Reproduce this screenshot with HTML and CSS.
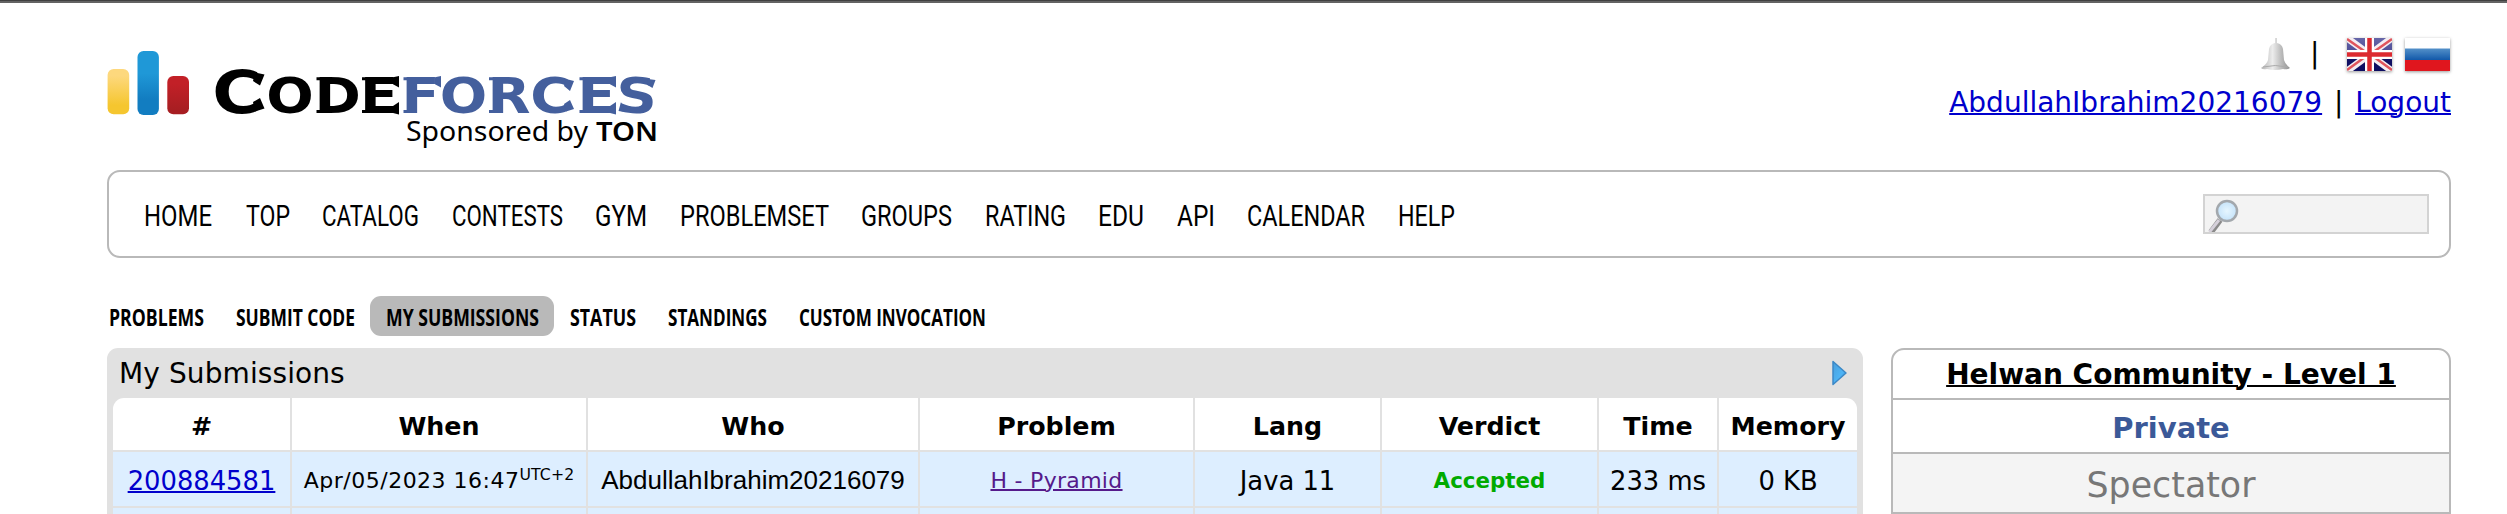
FILE: index.html
```html
<!DOCTYPE html>
<html lang="en">
<head>
<meta charset="utf-8">
<title>My Submissions - Codeforces</title>
<link rel="stylesheet" href="styles.css">
</head>
<body>
<div class="topline"></div>
<div class="page">
  <header class="header">
    <svg class="logo" width="556" height="106" viewBox="0 0 556 106">
      <defs>
        <linearGradient id="gy" x1="0" y1="0" x2="0" y2="1"><stop offset=".15" stop-color="#fdd87d"/><stop offset=".8" stop-color="#f5c62f"/></linearGradient>
        <linearGradient id="gb" x1="0" y1="0" x2="0" y2="1"><stop offset=".35" stop-color="#1f98d7"/><stop offset=".75" stop-color="#127dc1"/></linearGradient>
        <linearGradient id="gr" x1="0" y1="0" x2="0" y2="1"><stop offset=".2" stop-color="#c22027"/><stop offset=".9" stop-color="#a71e22"/></linearGradient>
      </defs>
      <rect x=".6" y="32" width="21.6" height="45.3" rx="6" fill="url(#gy)"/>
      <rect x="30.5" y="14" width="21.4" height="64" rx="6" fill="url(#gb)"/>
      <rect x="60.3" y="39" width="21.7" height="38.3" rx="6" fill="url(#gr)"/>
      <g class="word" transform="scale(1.14 1)">
        <text x="92.3 139.6 182.1 221.9" y="76"><tspan class="cap">C</tspan>ODE</text>
        <text class="blue" x="258.3 291.8 333.8 371.2 412.7 447" y="76">FORCES</text>
      </g>
      <path d="M148 35.500L157.500 37.500 153 48.500 146 44zM148 74.500L157.500 71.500 153 61 146 65zM209.500 40.300h5v3h-5zM209.500 73h5v3h-5zM255 40.300h5v3h-5zM255 73h5v3h-5zM286 40.300L292 39v11.500l-6-3.300zM286 76l6 1.500V65l-6 4z"/>
      <path class="blue" d="M296.500 40.300h5v3h-5zM296.500 73h13v3h-13zM328 40.300l6-1.300v11.500l-6-3.300zM382 40.300h5v3h-5zM382 73h13v3h-13zM459 42L467 44 463 54 457 49zM459 74.500L467 72 463 63 457 67zM472.500 40.300h5v3h-5zM472.500 73h5v3h-5zM503 40.300l6-1.300v11.500l-6-3.300zM503 76l6 1.500V65l-6 4zM541 42l7.500 1-3 8-5-3zM514 65l-2.500 9 6 1z"/>
      <text class="sponsor" x="299" y="104" textLength="182" lengthAdjust="spacingAndGlyphs">Sponsored by</text>
      <text class="sponsor ton" x="489" y="104" textLength="62" lengthAdjust="spacingAndGlyphs">TON</text>
    </svg>
    <div class="account">
      <div class="langs">
        <svg class="bell" width="31" height="34" viewBox="0 0 31 34">
          <defs><linearGradient id="be"><stop offset="0" stop-color="#b4b4b4"/><stop offset=".4" stop-color="#ececec"/><stop offset=".65" stop-color="#c3c3c3"/><stop offset="1" stop-color="#8f8f8f"/></linearGradient></defs>
          <path d="M15 1h2v5q5 1 6 6l1 11q1 4 6 8-3 2-7 1-8 2-16 0-4 1-6-1 6-4 7-8l1-11q1-5 6-6z" fill="url(#be)"/>
          <path d="M3 30q12-3 25 0" fill="none" stroke="#aaa"/>
        </svg>
        <span class="bar">|</span>
        <svg class="flag" width="45" height="33" viewBox="0 0 45 33">
          <defs><linearGradient id="uk" x1="0" y1="0" x2="0" y2="1"><stop offset="0" stop-color="#6666a8"/><stop offset=".48" stop-color="#4a4a94"/><stop offset=".52" stop-color="#151567"/><stop offset="1" stop-color="#0c0c60"/></linearGradient></defs>
          <rect width="45" height="33" fill="url(#uk)"/>
          <svg width="45" height="33" class="clip">
            <path d="M0 0l45 33M45 0L0 33" stroke="#f4eef2" stroke-width="7"/>
            <path d="M0 1l20 14M45 1L25 15M0 32l18-13M45 32L27 19" stroke="#e0555c" stroke-width="2.500"/>
          </svg>
          <path d="M22.500 0v33M0 16.500h45" stroke="#fff" stroke-width="9"/>
          <path d="M22.500 0v33M0 16.500h45" stroke="#dc2a30" stroke-width="4.500"/>
        </svg>
        <svg class="flag" width="45" height="33" viewBox="0 0 45 33">
          <defs><linearGradient id="ru" x1="0" y1="0" x2="0" y2="1"><stop offset="0" stop-color="#5390c9"/><stop offset="1" stop-color="#0f56a8"/></linearGradient></defs>
          <rect width="45" height="33" fill="#fff"/>
          <rect y="10.500" width="45" height="12" fill="url(#ru)"/>
          <rect y="22" width="45" height="11" fill="#e0161e"/>
        </svg>
      </div>
      <div class="user"><a href="#" class="handle">AbdullahIbrahim20216079</a><span class="sep">|</span><a href="#" class="logout">Logout</a></div>
    </div>
  </header>

  <nav class="menu">
    <div class="menu-items">
      <svg width="69" height="30"><text y="27" textLength="68" lengthAdjust="spacingAndGlyphs">HOME</text></svg>
      <svg width="44" height="30"><text y="27" textLength="44" lengthAdjust="spacingAndGlyphs">TOP</text></svg>
      <svg width="97" height="30"><text y="27" textLength="97" lengthAdjust="spacingAndGlyphs">CATALOG</text></svg>
      <svg width="111" height="30"><text y="27" textLength="111" lengthAdjust="spacingAndGlyphs">CONTESTS</text></svg>
      <svg width="52" height="30"><text y="27" textLength="52" lengthAdjust="spacingAndGlyphs">GYM</text></svg>
      <svg width="149" height="30"><text y="27" textLength="149" lengthAdjust="spacingAndGlyphs">PROBLEMSET</text></svg>
      <svg width="91" height="30"><text y="27" textLength="91" lengthAdjust="spacingAndGlyphs">GROUPS</text></svg>
      <svg width="81" height="30"><text y="27" textLength="81" lengthAdjust="spacingAndGlyphs">RATING</text></svg>
      <svg width="46" height="30"><text y="27" textLength="46" lengthAdjust="spacingAndGlyphs">EDU</text></svg>
      <svg width="38" height="30"><text y="27" textLength="38" lengthAdjust="spacingAndGlyphs">API</text></svg>
      <svg width="118" height="30"><text y="27" textLength="118" lengthAdjust="spacingAndGlyphs">CALENDAR</text></svg>
      <svg width="58" height="30"><text y="27" textLength="57" lengthAdjust="spacingAndGlyphs">HELP</text></svg>
    </div>
    <div class="search">
      <svg width="34" height="36" viewBox="0 0 34 36">
        <defs><radialGradient id="le"><stop offset="0" stop-color="#e6f6ff"/><stop offset="1" stop-color="#c5e3fa"/></radialGradient></defs>
        <path d="M15 24L6 36" stroke="#8a8a8a" stroke-width="6"/>
        <path d="M14 24L4.500 36" stroke="#d5d0da" stroke-width="3"/>
        <circle cx="22" cy="15" r="10" fill="url(#le)" stroke="#a3a8ad" stroke-width="2.500"/>
      </svg>
    </div>
  </nav>

  <nav class="submenu">
    <svg width="96" height="40"><text x="1" y="30" textLength="95" lengthAdjust="spacingAndGlyphs">PROBLEMS</text></svg>
    <svg width="119" height="40"><text y="30" textLength="119" lengthAdjust="spacingAndGlyphs">SUBMIT CODE</text></svg>
    <span class="current"><svg width="154" height="40"><text x="1" y="30" textLength="153" lengthAdjust="spacingAndGlyphs">MY SUBMISSIONS</text></svg></span>
    <svg width="66" height="40"><text y="30" textLength="66" lengthAdjust="spacingAndGlyphs">STATUS</text></svg>
    <svg width="99" height="40"><text y="30" textLength="99" lengthAdjust="spacingAndGlyphs">STANDINGS</text></svg>
    <svg width="187" height="40"><text y="30" textLength="187" lengthAdjust="spacingAndGlyphs">CUSTOM INVOCATION</text></svg>
  </nav>

  <main class="content">
    <section class="datatable">
      <div class="caption">
        <span>My Submissions</span>
        <svg width="15" height="26" viewBox="0 0 15 26">
          <defs><linearGradient id="ar" x1="0" y1="0" x2="1" y2="1"><stop offset="0" stop-color="#4a9fdc"/><stop offset=".6" stop-color="#4db4f5"/><stop offset="1" stop-color="#2d86cd"/></linearGradient></defs>
          <path d="M1 1.500L14 13 1 24.500z" fill="url(#ar)" stroke="#3c88c6" stroke-width="1.500" stroke-linejoin="round"/>
        </svg>
      </div>
      <div class="grid">
        <div class="th">#</div><div class="th">When</div><div class="th">Who</div><div class="th">Problem</div><div class="th">Lang</div><div class="th">Verdict</div><div class="th">Time</div><div class="th">Memory</div>
        <div class="td"><a href="#" class="id">200884581</a></div>
        <div class="td small when"><span>Apr/05/2023 16:47</span><span class="utc">UTC+2</span></div>
        <div class="td who">AbdullahIbrahim20216079</div>
        <div class="td small"><a href="#" class="problem">H - Pyramid</a></div>
        <div class="td">Java 11</div>
        <div class="td verdict">Accepted</div>
        <div class="td">233 ms</div>
        <div class="td">0 KB</div>
        <div class="td"></div><div class="td"></div><div class="td"></div><div class="td"></div><div class="td"></div><div class="td"></div><div class="td"></div><div class="td"></div>
      </div>
    </section>
    <aside class="sidebar">
      <div class="group"><a href="#">Helwan Community - Level 1</a></div>
      <div class="private">Private</div>
      <div class="role">Spectator</div>
    </aside>
  </main>
</div>
</body>
</html>
```
FILE: styles.css
```css
* { box-sizing: border-box; }
body { margin: 0; background: #fff; color: #000; font-family: "DejaVu Sans", sans-serif; }
.topline { height: 3px; border-top: 1px solid #404040; background: #636363; }
.page { height: 511px; overflow: hidden; padding: 0 56px 0 107px; }
a { color: #0000cc; text-decoration-thickness: 2px; }
svg { display: block; overflow: visible; flex: none; }
.clip { overflow: hidden; }

.header { display: flex; justify-content: space-between; height: 167px; padding-top: 34px; }
.word text { font: bold 49px "DejaVu Sans", sans-serif; }
.word .cap { font-size: 59px; }
.blue { fill: #445f9d; }
.sponsor { font: 27.500px "Noto Sans", sans-serif; }
.ton { font-weight: 600; }

.account { display: flex; flex-direction: column; align-items: flex-end; width: 520px; }
.langs { display: flex; align-items: center; height: 34px; padding-right: 1px; }
.bar { margin: 0 26px 0 19px; width: 11px; font-size: 28px; line-height: 34px; }
.flag { box-shadow: 0 1px 3px #999; }
.flag + .flag { margin-left: 13px; }
.user { margin-top: 15px; font-size: 28px; line-height: 34px; white-space: nowrap; }
.sep { display: inline-block; width: 33px; text-align: center; }

.menu {
  display: flex; align-items: center; justify-content: space-between;
  height: 88px; padding: 0 20px 0 35px;
  border: 2px solid #b9b9b9; border-radius: 13px;
}
.menu-items { display: flex; gap: 32.500px; }
.menu text { font: 29.500px Roboto, sans-serif; }
.search { width: 226px; height: 40px; border: 2px solid #d3d3d3; background: #f3f3f3; overflow: hidden; }

.submenu { display: flex; height: 90px; padding: 38px 0 0 1px; }
.submenu > svg { margin-right: 32px; }
.submenu > svg:nth-child(2) { margin-right: 15px; }
.submenu text { font: bold 23px "Open Sans", sans-serif; }
.current { height: 40px; margin-right: 16px; padding: 0 15px; border-radius: 11px; background: #b9b9b9; }

.content { display: flex; justify-content: space-between; align-items: flex-start; }
.datatable { width: 1756px; height: 180px; padding: 0 6px; border-radius: 11px 11px 0 0; background: #e1e1e1; }
.caption { display: flex; justify-content: space-between; align-items: center; height: 50px; padding: 0 10px 0 6px; font-size: 28px; letter-spacing: .1px; }
.caption span { line-height: 48px; padding-top: 2px; }
.grid {
  display: grid; gap: 2px; overflow: hidden;
  grid-template-columns: 177px 294px 330px 273px 185px 215px 118px 138px;
  grid-template-rows: 52px 54px 54px;
  border-radius: 11px 11px 0 0;
}
.th, .td { display: flex; justify-content: center; white-space: nowrap; }
.th { background: #fff; font-weight: bold; font-size: 25.300px; line-height: 57px; }
.td { background: #ddeeff; font-size: 25.800px; line-height: 58px; }
.small { font-size: 22px; line-height: 57px; }
.when { letter-spacing: .5px; }
.utc { font-size: 15.700px; line-height: 45px; letter-spacing: .1px; }
.who { font-family: "Liberation Sans", Arial, sans-serif; font-size: 26px; line-height: 56px; }
.verdict { color: #00aa00; font-weight: bold; font-size: 21.400px; line-height: 58px; }
.problem { color: #551a8b; letter-spacing: .3px; }

.sidebar { width: 560px; border: 2px solid #b9b9b9; border-radius: 13px 13px 0 0; text-align: center; }
.sidebar div { border-bottom: 2px solid #b9b9b9; }
.group { height: 50px; font-weight: bold; font-size: 28px; line-height: 49px; }
.group a { color: #000; }
.private { height: 54px; color: #3b5998; font-weight: bold; font-size: 29px; line-height: 56px; }
.role { height: 60px; background: #f4f4f4; color: #777; font-size: 34.800px; line-height: 62px; }
```
